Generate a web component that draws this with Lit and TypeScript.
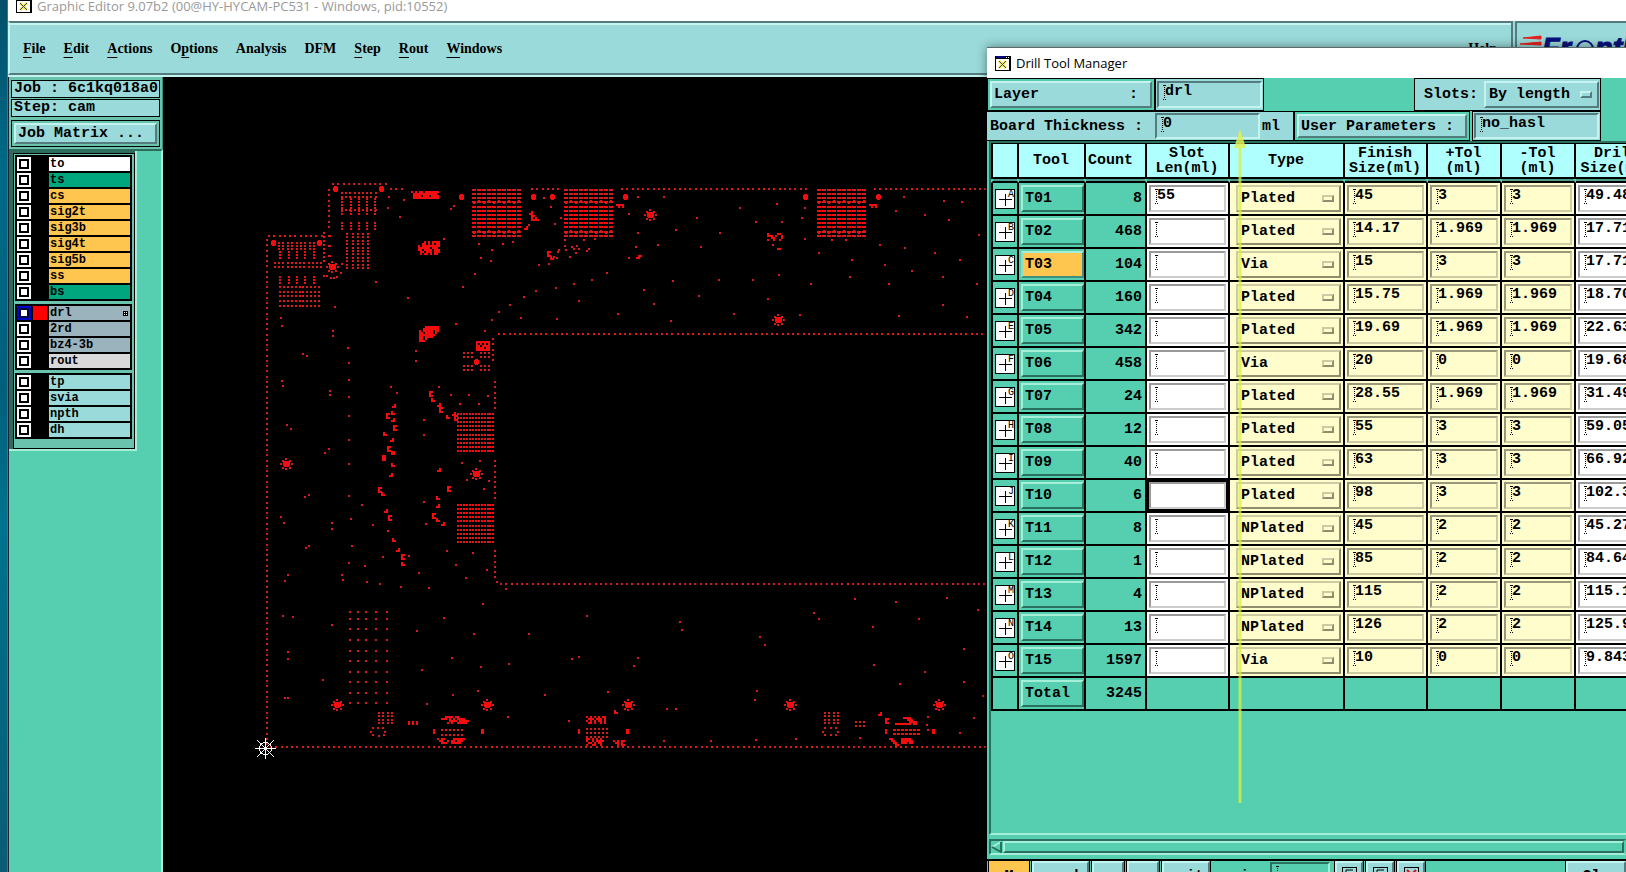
import { LitElement, html, svg, css, nothing } from "lit";
import { customElement } from "lit/decorators.js";
import { classMap } from "lit/directives/class-map.js";

type Pt = [number, number];

const MENUS: Array<[string, string, string]> = [
  ["", "F", "ile"], ["", "E", "dit"], ["", "A", "ctions"], ["O", "p", "tions"], ["Analysis", "", ""],
  ["DFM", "", ""], ["", "S", "tep"], ["", "R", "out"], ["", "W", "indows"],
];

const LAYERS: Array<Array<[string, string]>> = [
  [["to", "white"], ["ts", "green"], ["cs", "amber"], ["sig2t", "amber"], ["sig3b", "amber"], ["sig4t", "amber"], ["sig5b", "amber"], ["ss", "amber"], ["bs", "green"]],
  [["drl", "slate"], ["2rd", "slate"], ["bz4-3b", "slate"], ["rout", "gray"]],
  [["tp", "aqua"], ["svia", "aqua"], ["npth", "aqua"], ["dh", "aqua"]],
];

interface Tool { mark: string; name: string; count: number; slot: string; type: string; size: string; plus: string; minus: string; drill: string; }
const tool = (mark: string, name: string, count: number, slot: string, type: string, size: string, plus: string, minus: string, drill: string): Tool =>
  ({ mark, name, count, slot, type, size, plus, minus, drill });

const TOOLS: Tool[] = [
  tool("A", "T01", 8, "55", "Plated", "45", "3", "3", "49.488"),
  tool("B", "T02", 468, "", "Plated", "14.17", "1.969", "1.969", "17.717"),
  tool("C", "T03", 104, "", "Via", "15", "3", "3", "17.717"),
  tool("D", "T04", 160, "", "Plated", "15.75", "1.969", "1.969", "18.701"),
  tool("E", "T05", 342, "", "Plated", "19.69", "1.969", "1.969", "22.638"),
  tool("F", "T06", 458, "", "Via", "20", "0", "0", "19.685"),
  tool("G", "T07", 24, "", "Plated", "28.55", "1.969", "1.969", "31.496"),
  tool("H", "T08", 12, "", "Plated", "55", "3", "3", "59.055"),
  tool("I", "T09", 40, "", "Plated", "63", "3", "3", "66.929"),
  tool("J", "T10", 6, "", "Plated", "98", "3", "3", "102.362"),
  tool("K", "T11", 8, "", "NPlated", "45", "2", "2", "45.276"),
  tool("L", "T12", 1, "", "NPlated", "85", "2", "2", "84.646"),
  tool("M", "T13", 4, "", "NPlated", "115", "2", "2", "115.157"),
  tool("N", "T14", 13, "", "NPlated", "126", "2", "2", "125.984"),
  tool("O", "T15", 1597, "", "Via", "10", "0", "0", "9.843"),
];

/** Collects drilled holes as small squares, in canvas pixels. */
class HolePlot {
  dim = "";
  hot = "";
  rect(x: number, y: number, w: number, h: number, hot = false) {
    const d = `M${Math.round(x)} ${Math.round(y)}h${w}v${h}h${-w}z`;
    if (hot) this.hot += d; else this.dim += d;
  }
  grid(x: number, y: number, cols: number, rows: number, dx: number, dy: number, hot = false, w = 2, h = 2) {
    for (let r = 0; r < rows; r++) for (let c = 0; c < cols; c++) this.rect(x + c * dx, y + r * dy, w, h, hot);
  }
  row(x0: number, x1: number, y: number, pitch = 5.25) {
    for (let x = x0; x <= x1; x += pitch) this.rect(x, y, 2, 2);
  }
  col(x: number, y0: number, y1: number, pitch = 5.25) {
    for (let y = y0; y <= y1; y += pitch) this.rect(x, y, 2, 2);
  }
  sun(x: number, y: number) {
    this.rect(x - 2, y - 3, 5, 6, true);
    this.rect(x - 3, y - 2, 7, 4, true);
    for (const [a, b] of [[-6, -1], [5, -1], [-1, -6], [-1, 4], [-4, -4], [3, -4], [-4, 3], [3, 3]]) this.rect(x + a, y + b, 2, 2);
  }
  pad(x: number, y: number) {
    this.rect(x - 2, y - 2, 5, 4, true);
    this.rect(x - 1, y - 3, 3, 6, true);
  }
  bits(x: number, y: number, rows: string[], hot = true, pitch = 2) {
    rows.forEach((r, j) => [...r].forEach((c, i) => { if (c === "#") this.rect(x + i * pitch, y + j * pitch, 2, 2, hot); }));
  }
  bga(x: number, y: number) {
    [0, 4, 8, 12, 17, 21, 25, 29, 33, 37, 42, 46].forEach((dy, r) => {
      const weave = r === 3 || r === 10;
      for (let i = 0; i < 10; i++) {
        this.rect(x + i * 5, y + dy, 4, 2, r > 3 && r < 10);
        if (weave) this.rect(x + i * 5 + 1, y + dy + (i % 2 ? -1 : 1), 2, 2, true);
      }
    });
  }
  header(x: number, y: number, hotRows: number[]) {
    for (let r = 0; r < 10; r++) this.grid(x, y + r * 4.1, 13, 1, 2.95, 1, hotRows.includes(r));
  }
}

function plotBoard(): HolePlot {
  const p = new HolePlot();
  // Each survey list holds three units to the pixel, measured from its own corner.
  const holes = (ox: number, oy: number, list: number[]) => {
    for (let i = 0; i < list.length; i += 2) p.rect(ox + list[i] / 3 - 1, oy + list[i + 1] / 3 - 1, 2, 2);
  };
  const clusters = (ox: number, oy: number, list: number[]) => {
    for (let i = 0; i < list.length; i += 2) {
      const x = ox + list[i] / 3, y = oy + list[i + 1] / 3;
      const k = (i / 2) % 3;
      p.bits(x - 2, y - 2, k === 0 ? [".#", "##"] : k === 1 ? ["##", "#.", "##"] : ["#.", "##"]);
    }
  };

  // Board outline and inner cut-out
  p.col(103, 162, 668);
  p.row(107, 823, 669);
  p.row(105, 158, 158);
  p.col(165, 112, 152);
  p.row(169, 222, 106);
  p.row(227, 240, 111);
  p.row(368, 396, 111);
  p.row(458, 645, 111);
  p.row(711, 823, 111);
  p.row(335, 823, 256);
  p.col(329, 261, 284);
  p.col(331, 304, 332);
  p.col(331, 383, 421);
  p.col(331, 473, 500);
  p.row(337, 823, 506);
  holes(87, 373, [741, 396, 62, 891]);

  // Fiducials and square pads
  for (const [x, y] of [[169, 190], [123, 387], [313, 397], [174, 628], [324, 628], [487, 138], [615, 243], [465, 628], [627, 628], [776, 628]] as Pt[]) p.sun(x, y);
  for (const [x, y] of [[172, 112], [218, 112], [110, 166], [156, 166], [298, 120], [370, 120], [389, 120], [313, 285], [462, 120], [642, 120], [715, 120]] as Pt[]) p.pad(x, y);

  // Connector fields, top left
  p.grid(178, 115, 9, 2, 4.2, 3.5);
  for (const x of [178, 187, 195, 203, 211]) {
    p.grid(x, 121, 1, 6, 1, 3, x === 187 || x === 195);
    p.grid(x, 145, 1, 3, 1, 3, x === 187 || x === 195);
  }
  p.grid(178, 132, 9, 1, 4.2, 3);
  p.grid(183, 156, 2, 11, 5.5, 3.4);
  p.grid(194, 156, 3, 11, 5, 3.4);
  p.grid(115, 165, 9, 3, 4.4, 3);
  for (const x of [116, 125, 133, 141, 150]) {
    p.grid(x, 174, 1, 3, 1, 3, true);
    p.grid(x, 199, 1, 3, 1, 3, x !== 116);
  }
  p.grid(111, 185, 12, 2, 4.2, 4);
  p.grid(116, 209, 11, 5, 3.9, 4.7);
  p.grid(160, 155, 1, 8, 1, 4);
  p.grid(165, 158, 1, 3, 3, 10, false, 3, 2);
  holes(87, 93, [222, 318, 231, 319, 243, 324, 253, 323, 262, 321, 273, 309, 277, 282]);

  // Dense packages
  p.bga(309, 112); p.bga(401, 112); p.bga(654, 112);
  p.header(294, 336, [8, 9]);
  p.header(294, 427, [0, 1, 2, 3, 4]);
  p.bits(248, 114, ["#.#.##.#######", ".############.", ".####.###.####", ".#############"]);
  p.bits(255, 164, ["...#.#.####", "..##.#.#.##", "#.#########", "######.###", "##.####.###", ".##.###.###", ".#.##.#.##"]);
  p.bits(256, 249, ["...#######.", "..########.", "#.#####.##.", "##.####.#..", "########...", "##.####....", "##.#......", "###......."]);
  p.bits(313, 264, ["#######", "#.#.#.#", "##.####", "####.##", "#######"]);
  p.grid(300, 275, 3, 2, 4, 4); p.grid(317, 275, 3, 2, 4, 4);
  p.grid(300, 288, 3, 2, 4, 4); p.grid(317, 288, 3, 2, 4, 4);

  // Slotted via field, lower left
  for (const x of [186, 194, 202, 212, 223]) for (const y of [534, 541, 551, 562, 573, 583, 594, 604, 615, 625]) p.rect(x, y, 2, 2);
  p.grid(215, 635, 2, 4, 4, 3.3); p.grid(224, 635, 2, 4, 4, 3.3);
  holes(87, 373, [363, 845, 369, 835, 384, 833, 399, 835, 406, 845, 403, 855, 387, 857, 369, 855]);
  p.grid(245, 644, 3, 1, 4, 3, true, 2, 4);
  p.bits(278, 639, ["..####.##.....", "###.#.#.####..", "....####.#####", "...#.#..#####."]);
  p.grid(278, 652, 6, 2, 4, 5);
  p.bits(274, 661, ["#.##....######", ".##..#.##.###.", "..###..#####.."]);
  p.rect(270, 652, 2, 5, true); p.rect(318, 652, 3, 5, true);

  p.bits(423, 639, ["#.#.#.#.##", ".###.###.#", "#.#.#.##.#", ".##.#..#.#"]);
  p.grid(423, 651, 6, 3, 4, 4);
  p.bits(423, 661, ["##.#.#.#..", "#..#.####.", ".##.#.##..", "#..##..#.."]);
  p.rect(415, 652, 2, 5, true); p.rect(463, 652, 3, 5, true);
  p.bits(450, 663, ["#.#.##", ".##.#.", "..#.##"]);
  p.grid(661, 635, 2, 4, 4, 3.3); p.grid(670, 635, 2, 4, 4, 3.3);
  holes(397, 493, [790, 486, 796, 475, 812, 474, 827, 475, 833, 486, 827, 495, 812, 496, 796, 495]);
  p.grid(692, 644, 3, 2, 4, 4);
  p.bits(728, 640, ["......####...", "........###..", ".........####", "..########.##"]);
  p.grid(730, 652, 7, 2, 4, 4, true, 3, 2);
  p.bits(726, 661, ["##....#####.", ".##...######", "..##..###.##", "...##......."]);
  p.rect(722, 652, 2, 5, true); p.rect(769, 652, 3, 5, true);
  holes(397, 493, [1104, 441, 1102, 465, 1103, 480]);
  clusters(397, 493, [960, 432, 981, 450, 168, 427]);

  // Routing clusters
  clusters(87, 93, [431, 708, 414, 735, 429, 730, 429, 750, 434, 772, 404, 792, 425, 810, 417, 835, 428, 848, 403, 860, 543, 670, 550, 690, 568, 705, 574, 716, 593, 742, 613, 732, 618, 742]);
  clusters(87, 373, [428, 8, 403, 20, 428, 45, 424, 75, 390, 117, 399, 133, 408, 184, 420, 200, 432, 271, 445, 300, 458, 318, 460, 342, 568, 60, 596, 114, 565, 145, 565, 169, 553, 195, 565, 209, 579, 221]);
  clusters(87, 93, [843, 130, 850, 140, 862, 148, 828, 175, 896, 250, 905, 265]);
  holes(87, 93, [836, 164, 912, 262, 921, 264, 923, 245, 927, 240, 945, 228, 948, 240, 966, 230, 972, 238, 982, 228, 988, 238, 978, 248, 1012, 242, 1017, 236]);
  p.bits(453, 127, ["####", ".#.#"]); p.bits(706, 127, ["####", ".#.#"]);
  p.bits(604, 156, ["#....##", "###.#..#", "..##...#", "#..#..#."]);
  p.rect(614, 171, 4, 2, true); p.bits(473, 178, [".##", "##."]);

  // Stray vias
  holes(87, 93, [417, 81, 462, 90, 414, 114, 450, 141, 602, 117, 612, 108, 582, 207, 378, 336, 474, 384, 255, 411, 93, 444, 96, 468, 249, 483, 249, 498, 294, 534, 159, 552, 171, 558, 297, 579, 297, 630, 96, 633, 99, 648, 240, 663, 240, 675, 297, 681, 297, 738, 111, 765, 123, 777, 297, 810, 237, 837, 225, 849, 498, 543, 498, 573, 618, 462, 705, 483, 726, 450, 747, 426, 780, 405, 822, 381, 858, 363, 918, 354, 972, 342, 1026, 330, 1071, 309, 813, 444, 921, 447, 987, 393, 1104, 432, 639, 351, 675, 312, 693, 264, 723, 273, 726, 240, 687, 222, 759, 222, 789, 216, 867, 285, 897, 282, 945, 210, 1002, 210, 1035, 207, 960, 261, 882, 84, 903, 111, 915, 162, 933, 144, 423, 651, 441, 669, 567, 651, 603, 675, 657, 675, 714, 678, 630, 702, 687, 702, 522, 750, 522, 795]);
  holes(87, 373, [225, 9, 297, 42, 165, 141, 177, 135, 297, 138, 336, 165, 93, 201, 102, 219, 303, 207, 246, 219, 246, 237, 369, 225, 414, 243, 306, 288, 168, 294, 177, 288, 399, 321, 477, 318, 297, 339, 345, 348, 276, 375, 279, 390, 114, 375, 105, 393, 351, 396, 390, 402, 453, 411, 507, 369, 537, 414, 522, 156, 528, 222, 591, 303, 618, 345, 669, 309, 648, 384, 711, 360, 768, 417, 699, 462, 582, 504, 501, 543, 672, 552, 837, 552, 1011, 498, 99, 498, 129, 501, 246, 525, 114, 606, 114, 627, 219, 690, 105, 744, 114, 744, 606, 624, 516, 660, 693, 651, 777, 642, 966, 627, 987, 621, 609, 735, 684, 723, 531, 762, 774, 801, 885, 735, 957, 813, 1074, 726, 1098, 789, 636, 39, 690, 33, 651, 90, 717, 93, 702, 117]);
  holes(437, 93, [114, 81, 192, 81, 87, 132, 291, 144, 420, 114, 468, 156, 531, 102, 546, 156, 606, 144, 615, 114, 615, 207, 228, 180, 360, 189, 114, 189, 108, 231, 174, 225, 303, 231, 87, 264, 21, 309, 219, 333, 357, 330, 459, 330, 537, 315, 519, 225, 132, 360, 162, 402, 297, 378, 504, 387, 54, 432, 213, 453, 402, 432, 600, 435, 633, 342, 657, 249, 696, 210, 738, 210, 756, 270, 750, 321, 840, 225, 855, 285, 867, 342, 915, 234, 936, 303, 888, 123, 912, 81, 975, 135, 1032, 93, 1086, 96, 1047, 150, 1137, 195, 1005, 249, 1080, 270, 1029, 321, 1131, 342, 1029, 405, 1101, 441, 897, 438]);
  holes(397, 493, [81, 138, 360, 156, 366, 180, 234, 264, 222, 288, 144, 366, 591, 363, 585, 390, 321, 417, 348, 417, 312, 513, 453, 513, 588, 510, 708, 507, 600, 201, 615, 225, 762, 129, 777, 147, 885, 87, 1008, 96, 1161, 84, 1254, 120, 1077, 147, 939, 171, 942, 285, 1095, 306, 1212, 237, 1020, 342, 1212, 336, 1269, 378, 1242, 444, 1200, 489, 900, 504]);
  return p;
}

const BOARD = plotBoard();

const sharedStyles = css`
  *, *::after { box-sizing: border-box; }
  button, input, select {
    margin: 0; padding: 0; border: 0; border-radius: 0; background: none; color: #000;
    font: inherit; appearance: none; outline: none;
  }
  svg { display: block; flex: none; }
`;

const xIcon = html`<svg class="xicon" width="16" height="15" viewBox="0 0 16 15" aria-hidden="true">
  <rect width="16" height="15" fill="#000"/><rect x="1" y="3" width="13" height="11" fill="#fff"/>
  <rect x="1" y="0" width="9" height="2" fill="#0a0a80"/><rect x="11" y="1" width="1" height="1" fill="#fff"/><rect x="13" y="1" width="1" height="1" fill="#fff"/>
  <path d="M4 5l7 7M11 5l-7 7" stroke="#f0e860" stroke-width="3"/><path d="M4 5l7 7M11 5l-3 3M7 9l-3 3" stroke="#444" stroke-width="1"/>
</svg>`;

@customElement("layer-panel")
export class LayerPanel extends LitElement {
  static styles = [sharedStyles, css`
    :host { display: flex; flex-direction: column; font: bold 15px/16px "Liberation Mono", monospace; background: #55cfb0; border-left: 1px solid #223; }
    .job { background: #6ac3ac; padding: 3px 2px 2px; display: flex; flex-direction: column; gap: 1px; border-right: 1px solid #3a8f7c; }
    .line { border: 1px solid #000; background: #9bdada; padding: 0 2px; white-space: pre; }
    .matrix { border: 1px solid #000; padding: 2px; background: #6ac3ac; margin-top: 2px; }
    .matrix button { display: block; width: 100%; text-align: left; background: #9bdada; border: 2px solid; border-color: #c4f3f0 #547c7e #547c7e #c4f3f0; padding: 1px 2px 0; white-space: pre; }
    .well { flex: 1; border-top: 2px solid #2d6b5c; border-right: 2px solid #a5efd9; }
    .frame { width: 128px; background: #2d6b5c; padding: 2px 0 0 4px; border-right: 2px solid #a5efd9; border-bottom: 2px solid #a5efd9; }
    .inner { border: 1px solid #000; background: #6ac3ac; padding: 1px 2px 9px 1px; display: flex; flex-direction: column; gap: 3px; }
    .group { background: #000; padding: 2px; display: flex; flex-direction: column; gap: 2px; }
    .row { display: grid; grid-template-columns: 14px 14px 1fr; gap: 2px; height: 14px; font-size: 12px; line-height: 13px; }
    .row label { display: flex; justify-content: space-between; align-items: center; padding: 0 2px 0 1px; }
    .row input { width: 14px; height: 14px; border: 2px solid #fff; padding: 2px; background: linear-gradient(#fff, #fff) content-box, #000 padding-box; }
    .row input:checked { border-color: #0008c8; background: linear-gradient(#fff, #fff) content-box, #00063c padding-box; }
    .swatch { background: #000; }
    .on .swatch { background: #f00; }
    .white { background: #fff; } .green { background: #00a67e; } .amber { background: #fec64f; }
    .slate { background: #9ab3bd; } .gray { background: #d9d9d9; } .aqua { background: #9bdada; }
  `];

  render() {
    return html`
      <div class="job">
        <div class="line">Job : 6c1kq018a0</div>
        <div class="line">Step: cam</div>
        <div class="matrix"><button>Job Matrix ...</button></div>
      </div>
      <div class="well"><div class="frame"><div class="inner">
        ${LAYERS.map(group => html`<div class="group">
          ${group.map(([name, tone]) => html`<div class=${classMap({ row: true, on: name === "drl" })}>
            <input type="checkbox" id="layer-${name}" .checked=${name === "drl"}>
            <span class="swatch"></span>
            <label class=${tone} for="layer-${name}">${name}${name === "drl"
              ? html`<svg width="5" height="5" viewBox="0 0 5 5"><path d="M0 0h5v5h-5z"/><path fill="#fff" d="M1 1h1v1h-1zM3 1h1v1h-1zM1 3h1v1h-1zM3 3h1v1h-1z"/></svg>` : nothing}</label>
          </div>`)}
        </div>`)}
      </div></div></div>`;
  }
}

@customElement("board-view")
export class BoardView extends LitElement {
  static styles = css`
    :host { display: block; background: #000; overflow: hidden; min-width: 0; }
    svg { display: block; }
  `;
  render() {
    return html`<svg width="824" height="795" viewBox="0 0 824 795" role="img" aria-label="Drill layer" shape-rendering="crispEdges">
      <path d=${BOARD.dim} fill="#d41c1c"/>
      <path d=${BOARD.hot} fill="#f60c0c"/>
      <g stroke="#fff" fill="none"><circle cx="102.5" cy="671.5" r="6"/><path d="M92 671.5h21M102.500 661v21M94 663l17 17M111 663l-17 17"/></g>
    </svg>`;
  }
}

@customElement("drill-manager")
export class DrillManager extends LitElement {
  static styles = [sharedStyles, css`
    :host { display: flex; flex-direction: column; background: #55cfb0; font: bold 15px/15px "Liberation Mono", monospace; overflow: hidden; border-top: 1px solid #5a6a6a; box-shadow: 0 0 10px rgba(0, 0, 0, .45); }
    .title { height: 30px; background: #fff; display: flex; align-items: center; gap: 5px; padding-left: 8px; font: 13px/16px "Open Sans", sans-serif; flex: none; }
    .bar { display: flex; flex: none; width: 614px; }
    .box { border: 1px solid #000; background: #9bdada; display: flex; align-items: center; padding: 1px; height: 33px; white-space: pre; flex: none; }
    .box.low { height: 30px; }
    .teal { background: #55cfb0; padding: 2px; }
    .fill { flex: 1; }
    .raised { border: 2px solid; border-color: #c4f3f0 #547c7e #547c7e #c4f3f0; background: #9bdada; text-align: left; white-space: pre; }
    .box .raised { height: 100%; padding: 0 2px; }
    .layer { width: 168px; } .layer .raised { width: 100%; }
    .layername { width: 109px; }
    .thick { width: 307px; border-left: 0; padding-left: 3px; }
    .slots { width: 187px; padding-left: 9px; gap: 6px; }
    .params { width: 176px; } .params .raised { width: 100%; }
    .parval { width: 129px; margin-left: 2px; }
    .field { width: 100%; height: 27px; padding: 1px 0 7px 6px; border: 2px solid; border-color: #9a9a9a #ccc #ccc #9a9a9a;
      background: repeating-linear-gradient(#000 0 1px, transparent 1px 2px) 5px 2px / 1px 14px no-repeat,
        linear-gradient(90deg, #000 0 1px, transparent 1px 2px, #000 2px 3px) 4px 2px / 3px 1px no-repeat,
        linear-gradient(90deg, #000 0 1px, transparent 1px 2px, #000 2px 3px) 4px 16px / 3px 1px no-repeat, #fff; }
    .field.blue { background-color: #9bdada; border-color: #547c7e #c4f3f0 #c4f3f0 #547c7e; }
    .low .field { height: 26px; }
    .field.short { width: 105px; margin: 0 2px 0 12px; }
    .field.cream { background-color: #fffdcb; border-color: #99987a #cccba3 #cccba3 #99987a; }
    .pick { position: relative; display: flex; height: 27px; flex: 1; }
    .pick select { width: 100%; height: 100%; padding: 0 3px; border: 2px solid; border-color: #cccba3 #8f8e6c #8f8e6c #cccba3; background: #fffdcb; }
    .pick.blue select { background: #9bdada; border-color: #c4f3f0 #547c7e #547c7e #c4f3f0; }
    .pick::after { content: ""; position: absolute; right: 7px; top: 10px; width: 12px; height: 7px; border: 2px solid; border-color: #cccba3 #8f8e6c #8f8e6c #cccba3; pointer-events: none; }
    .pick.blue::after { border-color: #c4f3f0 #547c7e #547c7e #c4f3f0; }
    .sheet { flex: 1; margin-left: 2px; border-top: 2px solid #2a705f; border-left: 2px solid #2a705f; border-bottom: 2px solid #a5efd9; overflow: hidden; min-height: 0; }
    table { table-layout: fixed; width: 669px; border-collapse: separate; border-spacing: 0; }
    .c0 { width: 28px; } .c1 { width: 67px; } .c2 { width: 61px; } .c3, .c5 { width: 83px; } .c4 { width: 115px; } .c6 { width: 74px; } .c8 { width: 84px; }
    th { height: 36px; padding: 0 1px 0 0; font-weight: bold; background: #b0ffff; border: solid #000; border-width: 1px 2px 2px 0; }
    th.left { text-align: left; padding-left: 2px; }
    th:first-child, td:first-child { border-left: 2px solid #000; }
    .gap td { height: 4px; border-bottom-width: 2px; border-right-color: transparent; border-left-color: transparent; background: #4a9c88; background-clip: padding-box; }
    td { height: 33px; padding: 0 2px; border: solid #000; border-width: 0 2px 2px 0; }
    .num { text-align: right; }
    .count { padding-right: 3px; }
    td .raised { width: 63px; height: 27px; padding: 0 2px; background: #55cfb0; border-color: #a5efd9 #2a705f #2a705f #a5efd9; }
    td .sel { background: #fec64f; border-color: #a5efd9 #3f8f7c #3f8f7c #8edcc4; }
    .paper { background: #fff; }
    .light { background: #fffdcb; }
    .type { padding-left: 6px; }
    .focus { background: #000; }
    .focus .field { background: #fff; }
    .scroll { height: 16px; margin: 4px 0 4px 2px; border: 2px solid; border-color: #2a705f transparent #a5efd9 #2a705f; display: flex; gap: 1px; flex: none; }
    .thumb { flex: 1; border: 2px solid; border-color: #a5efd9 #2a705f #2a705f #a5efd9; }
    .actions { height: 13px; flex: none; border-top: 2px solid #000; display: flex; padding-left: 2px; overflow: hidden; gap: 3px; }
    .actions button { display: flex; justify-content: center; align-items: flex-start; height: 33px; border: 2px solid; border-color: #c4f3f0 #547c7e #547c7e #c4f3f0; background: #9bdada; outline: 1px solid #000; flex: none; padding: 4px 0 0; line-height: 20px; }
    .actions .warm { background: #fec64f; border-color: #fec64f; width: 40px; }
    .actions .w57 { width: 57px; } .actions .w32 { width: 32px; } .actions .w48 { width: 48px; } .actions .w28 { width: 28px; }
    .actions label { margin: 6px 0 0 18px; width: 36px; line-height: 20px; flex: none; }
    .actions .field { width: 60px; height: 30px; margin-top: 1px; background-color: #55cfb0; border-color: #2a705f #a5efd9 #a5efd9 #2a705f; flex: none; margin-right: 2px; }
    .actions .last { margin-left: auto; width: 60px; }
  `];

  private field(value: string, tone: string, label: string) {
    return html`<input class="field ${tone}" .value=${value} aria-label=${label}>`;
  }

  render() {
    return html`
      <div class="title">${xIcon}<span>Drill Tool Manager</span></div>
      <div class="bar">
        <div class="box teal layer"><button class="raised">Layer          :</button></div>
        <div class="box layername">${this.field("drl", "blue", "Layer")}</div>
        <div class="fill"></div>
        <div class="box slots"><label for="slots">Slots:</label><span class="pick blue"><select id="slots"><option>By length</option></select></span></div>
      </div>
      <div class="bar">
        <div class="box low thick"><label for="thickness">Board Thickness :</label><input id="thickness" class="field blue short" .value=${"0"}>ml</div>
        <div class="box low teal params"><button class="raised">User Parameters :</button></div>
        <div class="box low parval">${this.field("no_hasl", "blue", "User parameters")}</div>
      </div>
      <div class="sheet">
        <table>
          <colgroup><col class="c0"><col class="c1"><col class="c2"><col class="c3"><col class="c4"><col class="c5"><col class="c6"><col class="c6"><col class="c8"></colgroup>
          <thead><tr><th></th><th>Tool</th><th class="left">Count</th><th>Slot<br>Len(ml)</th><th>Type</th><th>Finish<br>Size(ml)</th><th>+Tol<br>(ml)</th><th>-Tol<br>(ml)</th><th>Drill<br>Size(ml)</th></tr></thead>
          <tbody>
            <tr class="gap">${Array.from({ length: 9 }, () => html`<td></td>`)}</tr>
            ${TOOLS.map(t => html`<tr>
              <td><svg width="20" height="20" viewBox="0 0 20 20" aria-hidden="true"><rect x=".5" y=".5" width="19" height="19" fill="#fff" stroke="#000"/><path d="M10.500 5v12M4 10.500h13" stroke="#000"/><text x="13" y="8" font-size="10" font-weight="400">${t.mark}</text></svg></td>
              <td><button class=${classMap({ raised: true, sel: t.name === "T03" })}>${t.name}</button></td>
              <td class="num count">${t.count}</td>
              <td class=${classMap({ paper: true, focus: t.name === "T10" })}>${this.field(t.slot, "", `${t.name} slot length`)}</td>
              <td class="light type"><span class="pick"><select aria-label="${t.name} type"><option>${t.type}</option></select></span></td>
              <td class="light">${this.field(t.size, "cream", `${t.name} finish size`)}</td>
              <td class="light">${this.field(t.plus, "cream", `${t.name} plus tolerance`)}</td>
              <td class="light">${this.field(t.minus, "cream", `${t.name} minus tolerance`)}</td>
              <td class="paper">${this.field(t.drill, "", `${t.name} drill size`)}</td>
            </tr>`)}
            <tr><td></td><td><button class="raised">Total</button></td><td class="num count">3245</td><td></td><td></td><td></td><td></td><td></td><td></td></tr>
          </tbody>
        </table>
      </div>
      <div class="scroll">
        <svg width="11" height="12" viewBox="0 0 11 12"><path d="M10 1L1 6l9 5z" fill="#55cfb0"/><path d="M10 1L1 6" stroke="#a5efd9" stroke-width="2"/><path d="M1 6l9 5V1" stroke="#2a705f" stroke-width="2" fill="none"/></svg>
        <div class="thumb"></div>
      </div>
      <div class="actions">
        <button class="warm">M</button><button class="w57">used</button><button class="w32">on</button><button class="w32">no</button><button class="w48">unit</button>
        <label for="scale">size</label><input id="scale" class="field" .value=${""}>
        ${["?", "F", "!"].map((g, i) => html`<button class="w28" aria-label=${`Action ${i + 1}`}><svg width="15" height="15" viewBox="0 0 15 15"><rect x=".5" y=".5" width="14" height="14" fill="none" stroke="#000"/>${g === "!"
          ? svg`<path d="M3 3l9 9M12 3l-9 9" stroke="#e01020" stroke-width="2"/>` : svg`<path d="M4 11V3h7" fill="none" stroke="#000"/>`}</svg></button>`)}
        <button class="last">Cls</button>
      </div>`;
  }
}

@customElement("app-root")
export class AppRoot extends LitElement {
  static styles = [sharedStyles, css`
    :host { display: flex; position: relative; height: 100vh; overflow: hidden; padding-left: 7px; background: linear-gradient(#04506a, #006a86 20%, #015f7c 45%, #00738e 60%, #0a5c74); }
    .window { flex: 1; min-width: 0; display: flex; flex-direction: column; background: #6ac3ac; border-left: 1px solid #5a6a70; }
    .title { height: 21px; background: #fff; color: #999; display: flex; align-items: flex-start; gap: 5px; padding-left: 8px; font: 13px/12px "Open Sans", sans-serif; overflow: hidden; flex: none; }
    .xicon { margin-top: -2px; }
    .top { display: flex; height: 56px; flex: none; background: #9bdada; border-bottom: 2px solid #c4f3f0; }
    nav { flex: 1; display: flex; align-items: center; gap: 18px; padding: 2px 14px 0 13px; border: 2px solid; border-color: #547c7e #547c7e #547c7e #c4f3f0; box-shadow: inset 0 2px #c4f3f0; }
    nav button { font: bold 14px/20px "Liberation Serif", serif; white-space: nowrap; }
    nav u { text-underline-offset: 4px; }
    nav .help { margin-left: auto; }
    .brand { width: 111px; margin-left: 2px; border: solid #547c7e; border-width: 2px 0 2px 2px; overflow: hidden; }
    .body { flex: 1; display: grid; grid-template-columns: 155px 1fr; min-height: 0; }
    .dialog { position: absolute; left: 987px; top: 47px; right: 0; bottom: 0; }
    .arrow { position: absolute; left: 1234px; top: 129px; pointer-events: none; }
  `];

  render() {
    return html`
      <div class="window">
        <div class="title">${xIcon}<span>Graphic Editor 9.07b2 (00@HY-HYCAM-PC531 - Windows, pid:10552)</span></div>
        <div class="top">
          <nav>
            ${MENUS.map(([a, u, b]) => html`<button>${a}${u ? html`<u>${u}</u>` : nothing}${b}</button>`)}
            <button class="help">Help</button>
          </nav>
          <div class="brand"><svg width="180" height="52" viewBox="0 0 180 52">
            <path d="M6 15l18-2v3zM3 21l21-2v3zM8 27l16-2v3z" fill="#e8201c" stroke="#e8201c"/>
            <text x="25" y="35" font-family="Liberation Sans" font-size="29" font-weight="700" font-style="italic" fill="#08107c" stroke="#08107c">Fr</text>
            <circle cx="68" cy="26" r="8" fill="none" stroke="#08107c" stroke-width="2"/>
            <text x="78" y="35" font-family="Liberation Sans" font-size="29" font-weight="700" font-style="italic" fill="#08107c" stroke="#08107c">ntline</text>
          </svg></div>
        </div>
        <div class="body"><layer-panel></layer-panel><board-view></board-view></div>
      </div>
      <drill-manager class="dialog"></drill-manager>
      <svg class="arrow" width="12" height="675" viewBox="0 0 12 675" aria-hidden="true"><path d="M6 0l6 19H0z" fill="#dff050" fill-opacity=".85"/><path d="M6 19v655" stroke="#d8f03c" stroke-opacity=".75" stroke-width="3"/></svg>`;
  }
}
